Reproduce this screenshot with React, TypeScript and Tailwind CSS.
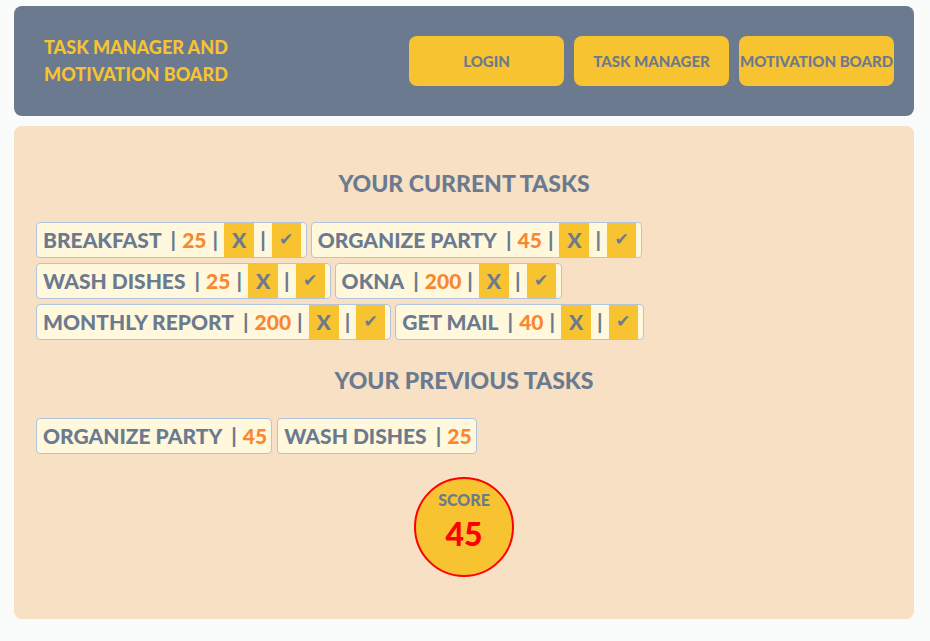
import React from 'react'

type Task = { name: string; points: number }

const currentRows: Task[][] = [
  [
    { name: 'BREAKFAST', points: 25 },
    { name: 'ORGANIZE PARTY', points: 45 },
  ],
  [
    { name: 'WASH DISHES', points: 25 },
    { name: 'OKNA', points: 200 },
  ],
  [
    { name: 'MONTHLY REPORT', points: 200 },
    { name: 'GET MAIL', points: 40 },
  ],
]

const previousTasks: Task[] = [
  { name: 'ORGANIZE PARTY', points: 45 },
  { name: 'WASH DISHES', points: 25 },
]

const font = { fontFamily: 'Lato, "Open Sans", sans-serif' }

function CurrentTask({ task }: { task: Task }) {
  return (
    <div className="inline-flex h-[36px] items-stretch rounded-[4px] border border-[#b0c4de] bg-[#fff8dc] pl-[6px] pr-[5px] text-[21px] font-black text-[#6b7a8f]">
      <span className="flex items-center">{task.name}</span>
      <span className="flex items-center pl-[9px] pr-[6px]">|</span>
      <span className="flex items-center text-[#f7882f]">{task.points}</span>
      <span className="flex items-center px-[6px]">|</span>
      <button className="flex w-[30px] items-center justify-center bg-[#f7c331] text-[#6b7a8f]">
        X
      </button>
      <span className="flex items-center px-[6px]">|</span>
      <button
        className="flex w-[29px] items-center justify-center bg-[#f7c331] text-[17px] text-[#6b7a8f]"
        style={{ fontFamily: '"DejaVu Sans", sans-serif' }}
      >
        ✔
      </button>
    </div>
  )
}

function PreviousTask({ task }: { task: Task }) {
  return (
    <div className="inline-flex h-[36px] items-center rounded-[4px] border border-[#b0c4de] bg-[#fff8dc] pl-[6px] pr-[4px] text-[21px] font-black text-[#6b7a8f]">
      <span>{task.name}</span>
      <span className="pl-[9px] pr-[6px]">|</span>
      <span className="text-[#f7882f]">{task.points}</span>
    </div>
  )
}

export default function App() {
  return (
    <div
      className="flex min-h-[641px] flex-col bg-[#fafcfb] pt-[6px] pr-[16px] pb-[22px] pl-[14px]"
      style={font}
    >
      <header className="flex h-[110px] items-center justify-between rounded-lg bg-[#6b7a8f] pl-[30px] pr-[20px]">
        <div className="text-[18px] font-black leading-[27px] text-[#f7c331]">
          TASK MANAGER AND
          <br />
          MOTIVATION BOARD
        </div>
        <nav className="flex gap-[10px]">
          {['LOGIN', 'TASK MANAGER', 'MOTIVATION BOARD'].map((label) => (
            <button
              key={label}
              className="h-[50px] w-[155px] rounded-lg bg-[#f7c331] text-[15px] font-black text-[#6b7a8f]"
            >
              {label}
            </button>
          ))}
        </nav>
      </header>

      <main className="mt-[10px] flex flex-1 flex-col rounded-lg bg-[#f7e0c4] px-[22px] pt-[42px]">
        <h2 className="text-center text-[23px] font-black leading-[30px] text-[#6b7a8f]">
          YOUR CURRENT TASKS
        </h2>
        <div className="mt-[24px] flex flex-col gap-[5px]">
          {currentRows.map((row, i) => (
            <div key={i} className="flex gap-[4px]">
              {row.map((task) => (
                <CurrentTask key={task.name} task={task} />
              ))}
            </div>
          ))}
        </div>

        <h2 className="mt-[25px] text-center text-[23px] font-black leading-[30px] text-[#6b7a8f]">
          YOUR PREVIOUS TASKS
        </h2>
        <div className="mt-[23px] flex gap-[5px]">
          {previousTasks.map((task) => (
            <PreviousTask key={task.name} task={task} />
          ))}
        </div>

        <div className="mx-auto mt-[23px] flex h-[100px] w-[100px] flex-col items-center rounded-full border-2 border-[#ff0000] bg-[#f7c331] pt-[12px]">
          <div className="text-[16px] font-black leading-[18px] text-[#6b7a8f]">SCORE</div>
          <div className="mt-[8px] text-[32px] font-black leading-[34px] text-[#ff0000]">45</div>
        </div>
      </main>
    </div>
  )
}
